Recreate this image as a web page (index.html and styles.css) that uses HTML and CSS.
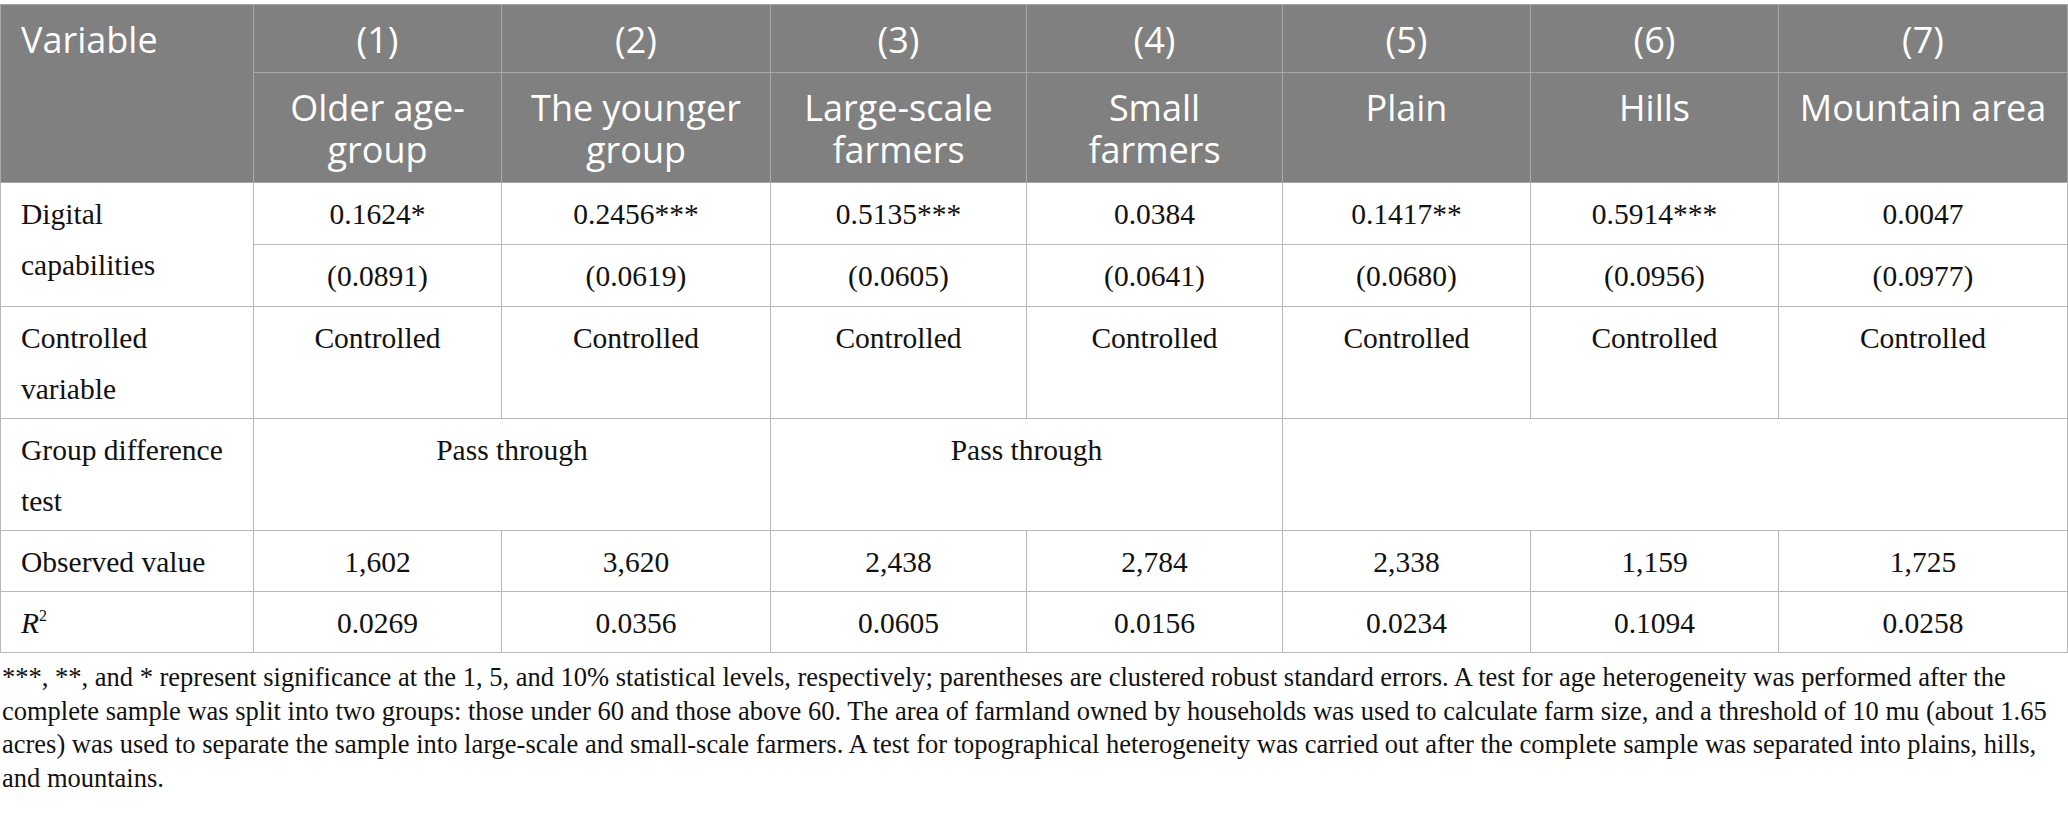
FILE: index.html
```html
<!DOCTYPE html>
<html lang="en">
<head>
<meta charset="utf-8">
<title>Heterogeneity analysis</title>
<link rel="stylesheet" href="styles.css">
</head>
<body>
<div class="wrap">
<table class="results">
<colgroup>
<col class="c0"><col class="c1"><col class="c2"><col class="c3"><col class="c4"><col class="c5"><col class="c6"><col class="c7">
</colgroup>
<thead>
<tr>
<th rowspan="2" class="var">Variable</th>
<th>(1)</th><th>(2)</th><th>(3)</th><th>(4)</th><th>(5)</th><th>(6)</th><th>(7)</th>
</tr>
<tr>
<th>Older age-group</th>
<th>The younger group</th>
<th>Large-scale farmers</th>
<th>Small farmers</th>
<th>Plain</th>
<th>Hills</th>
<th>Mountain area</th>
</tr>
</thead>
<tbody>
<tr class="coef">
<td rowspan="2" class="label">Digital capabilities</td>
<td>0.1624*</td><td>0.2456***</td><td>0.5135***</td><td>0.0384</td><td>0.1417**</td><td>0.5914***</td><td>0.0047</td>
</tr>
<tr class="coef">
<td>(0.0891)</td><td>(0.0619)</td><td>(0.0605)</td><td>(0.0641)</td><td>(0.0680)</td><td>(0.0956)</td><td>(0.0977)</td>
</tr>
<tr>
<td class="label">Controlled variable</td>
<td>Controlled</td><td>Controlled</td><td>Controlled</td><td>Controlled</td><td>Controlled</td><td>Controlled</td><td>Controlled</td>
</tr>
<tr>
<td class="label">Group difference test</td>
<td colspan="2">Pass through</td><td colspan="2">Pass through</td><td colspan="3"></td>
</tr>
<tr>
<td class="label">Observed value</td>
<td>1,602</td><td>3,620</td><td>2,438</td><td>2,784</td><td>2,338</td><td>1,159</td><td>1,725</td>
</tr>
<tr>
<td class="label"><i>R</i><sup>2</sup></td>
<td>0.0269</td><td>0.0356</td><td>0.0605</td><td>0.0156</td><td>0.0234</td><td>0.1094</td><td>0.0258</td>
</tr>
</tbody>
</table>
<p class="note">***, **, and * represent significance at the 1, 5, and 10% statistical levels, respectively; parentheses are clustered robust standard errors. A test for age heterogeneity was performed after the complete sample was split into two groups: those under 60 and those above 60. The area of farmland owned by households was used to calculate farm size, and a threshold of 10 mu (about 1.65 acres) was used to separate the sample into large-scale and small-scale farmers. A test for topographical heterogeneity was carried out after the complete sample was separated into plains, hills, and mountains.</p>
</div>
</body>
</html>
```
FILE: styles.css
```css
html, body {
  margin: 0;
  padding: 0;
  background: #ffffff;
}

.wrap {
  padding-top: 4px;
  width: 2068px;
}

.results {
  width: 2067px;
  border-collapse: collapse;
  table-layout: fixed;
  font-family: "Liberation Serif", "Times New Roman", serif;
  color: #111111;
}

.c0 { width: 253px; }
.c1 { width: 248px; }
.c2 { width: 269px; }
.c3 { width: 256px; }
.c4 { width: 256px; }
.c5 { width: 248px; }
.c6 { width: 248px; }
.c7 { width: 289px; }

.results th {
  background: #7f807f;
  color: #ffffff;
  font-family: "Open Sans", "Noto Sans", sans-serif;
  font-weight: 400;
  font-size: 36px;
  line-height: 42px;
  padding: 14px 14px 11px;
  text-align: center;
  vertical-align: top;
  border: 1px solid #a6a7a6;
}

.results th.var {
  text-align: left;
  padding-left: 20px;
}

.results td {
  font-size: 29.5px;
  line-height: 51px;
  padding: 6px 10px 3px;
  text-align: center;
  vertical-align: top;
  border: 1px solid #b8b8b8;
}

.results .coef td {
  padding-bottom: 4px;
}

.results td.label {
  text-align: left;
  padding-left: 20px;
  padding-right: 26px;
}

.results sup {
  font-size: 16px;
  line-height: 0;
  vertical-align: 12px;
}

.note {
  margin: 8px 0 0;
  padding-left: 2px;
  font-family: "Liberation Serif", "Times New Roman", serif;
  font-size: 26.5px;
  line-height: 33.5px;
  color: #111111;
}
```
